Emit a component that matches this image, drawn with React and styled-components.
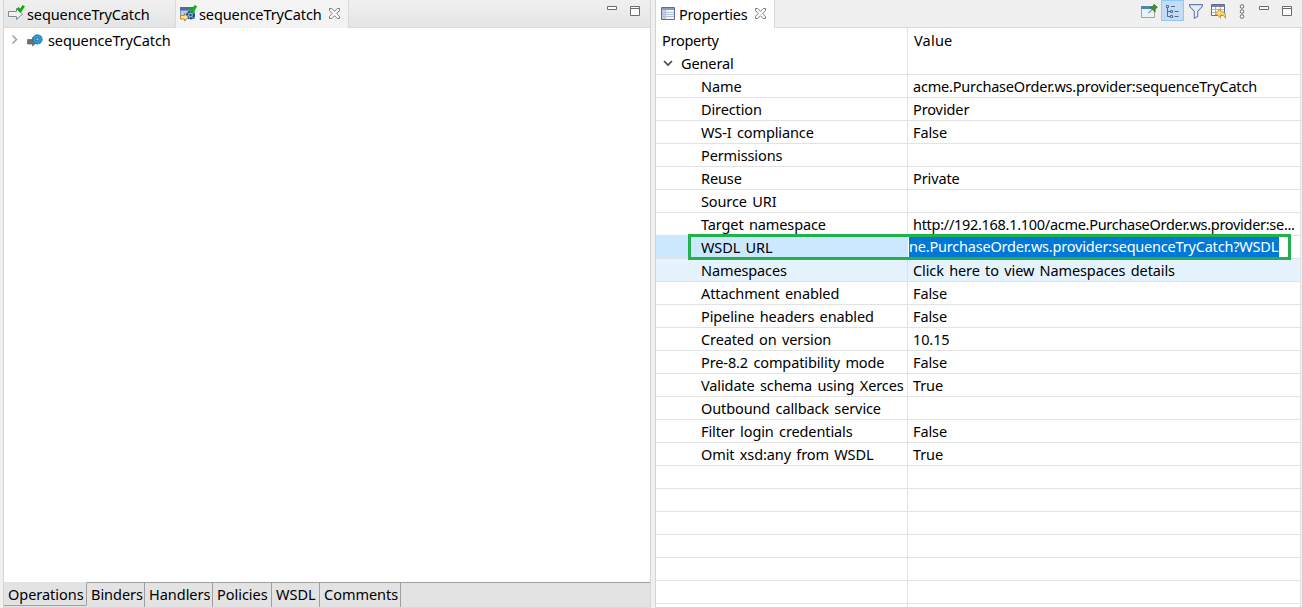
import React from "react";
import styled, { createGlobalStyle, css } from "styled-components";

const Global = createGlobalStyle`
  * { box-sizing: border-box; }
  body { margin: 0; background: #f0f0f0; overflow: hidden; }
`;

const Workbench = styled.div`
  display: flex;
  width: 1303px;
  height: 608px;
  background: #f0f0f0;
  color: #000;
  font-family: "Noto Sans", "Open Sans", sans-serif;
  font-size: 14.5px;
  line-height: 22px;
  white-space: nowrap;
`;

const Label = styled.span`
  letter-spacing: ${(p) => p.$ls ?? -0.11}px;
  word-spacing: 1.7px;
`;

const Panel = styled.section`
  display: flex;
  flex: none;
  flex-direction: column;
  border-left: 1px solid #d4d4d4;
  border-right: 1px solid #d4d4d4;
`;

const EditorPanel = styled(Panel)`
  width: 648px;
  margin: 0 4px 0 3px;
`;

const PropertiesPanel = styled(Panel)`
  width: 648px;
  border-bottom: 1px solid #d4d4d4;
`;

const TabBar = styled.header`
  display: flex;
  flex: none;
  height: 28px;
  background: linear-gradient(#f0f0f0, #e4e4e4);
  border-bottom: 1px solid #d9d9d9;
`;

const PlainTabBar = styled(TabBar)`
  background: #f0f0f0;
`;

const Tab = styled.div`
  display: flex;
  align-items: center;
  height: ${(p) => (p.$active ? 28 : 27)}px;
  width: ${(p) => p.$width}px;
  padding: 0 0 ${(p) => (p.$active ? 1 : 0)}px ${(p) => p.$pad}px;
  gap: ${(p) => p.$gap || 3}px;
  background: ${(p) => p.$bg || "transparent"};
  border-right: 1px solid #d9d9d9;
`;

const CloseSlot = styled.span`
  display: flex;
  margin-left: ${(p) => p.$left || 4}px;
`;

const Tools = styled.div`
  display: flex;
  margin-left: auto;
`;

const ToolButton = styled.span`
  display: flex;
  align-items: center;
  justify-content: center;
  width: 23px;
  height: 21px;
  padding-top: 2px;
  border: 1px solid transparent;
  border-top: 0;
  ${(p) =>
    p.$on &&
    css`
      background: #c2dcf3;
      border-color: #90c8f6;
      border-top: 1px solid #90c8f6;
    `}
`;

const WindowControls = styled.div`
  display: flex;
  gap: 13px;
  padding: 6px ${(p) => p.$right}px 0 ${(p) => p.$left || 0}px;
`;

const EditorBody = styled.div`
  flex: 1;
  background: #fff;
`;

const TreeRow = styled.div`
  display: flex;
  align-items: center;
  height: 23px;
  padding-left: 6px;
`;

const TreeIcon = styled.span`
  display: flex;
  margin: 0 5px 0 8px;
`;

const PageTabs = styled.footer`
  display: flex;
  height: 26px;
  background: #e3e3e3;
  border-bottom: 1px solid #d9d9d9;
`;

const PageTab = styled.div`
  width: ${(p) => p.$width}px;
  padding-left: 4px;
  height: ${(p) => (p.$active ? 24 : 25)}px;
  border-right: 1px solid #a0a0a0;
  border-top: 1px solid ${(p) => (p.$active ? "transparent" : "#a0a0a0")};
  ${(p) =>
    p.$active &&
    css`
      border-bottom: 1px solid #a0a0a0;
      border-bottom-right-radius: 2px;
    `}
`;

const PageTabsRest = styled.div`
  flex: 1;
  border-top: 1px solid #a0a0a0;
`;

const Table = styled.div`
  flex: 1;
  width: 645px;
  overflow: hidden;
  background: #fff;
  border-right: 1px solid #e2e2e2;
`;

const Row = styled.div`
  display: flex;
  height: ${(p) => (p.$header ? 24 : 23)}px;
  background: ${(p) => p.$bg || "#fff"};
`;

const Cell = styled.div`
  display: flex;
  align-items: center;
  height: 100%;
  border-bottom: 1px solid ${(p) => (p.$header ? "transparent" : "#e2e2e2")};
`;

const NameCell = styled(Cell)`
  flex: none;
  width: 252px;
  padding-left: ${(p) => p.$pad}px;
  border-right: 1px solid #e2e2e2;
`;

const ValueCell = styled(Cell)`
  flex: 1;
  min-width: 0;
  padding-left: ${(p) => (p.$header ? 6 : 5)}px;
`;

const Chevron = styled.span`
  display: flex;
  width: 18px;
`;

const EditField = styled.div`
  display: flex;
  width: 370px;
  height: 20px;
  margin: 0 0 1px -4px;
  line-height: 19px;
  background: #0078d7;
  color: #fff;
`;

const EditCell = styled(ValueCell)`
  background: #fff;
`;

const Highlight = styled.div`
  position: absolute;
  left: 688px;
  top: 234px;
  width: 603px;
  height: 26px;
  border: 3px solid #22b14c;
`;

const ArrowOutIcon = () => (
  <svg width="17" height="17" viewBox="0 0 17 17">
    <path d="M.5 6.500h8v-3l6 5.500-6 5.500v-3h-8z" fill="#eef1f4" stroke="#7b8c9b" />
    <path d="M9.500 3l2.800 2.900L15.800.800" fill="none" stroke="#12a812" strokeWidth="2.800" />
  </svg>
);

const ServiceIcon = () => (
  <svg width="17" height="17" viewBox="0 0 17 17">
    <path d="M.5 2.500h14v11H.5z" fill="#b9cbe4" stroke="#7f97bf" />
    <path d="M0 2h14v3.500H0z" fill="#4a6ba5" />
    <circle cx="10.500" cy="10" r="3.400" fill="#8fc0e4" stroke="#1f4f86" strokeWidth="2.200" strokeDasharray="2.600 .6" />
    <circle cx="10.500" cy="10" r="1.200" fill="#174477" />
    <path d="M.5 10.500h4v-2l4 3.700-4 3.800v-2h-4z" fill="#ffe39a" stroke="#b98a2c" />
    <path d="M9.800 3l2.700 2.900L15.800.800" fill="none" stroke="#12b012" strokeWidth="3" />
  </svg>
);

const OperationIcon = () => (
  <svg width="16" height="14" viewBox="0 0 16 14">
    <path d="M.5 6.500h5v-2l5 4.300-5 4.200v-2h-5z" fill="#6e6e6e" stroke="#555" strokeWidth=".6" />
    <circle cx="10.500" cy="6.300" r="4.300" fill="#3ba5dc" stroke="#1c7fbc" strokeWidth="1.600" strokeDasharray="2.400 .4" />
    <circle cx="10.500" cy="6.300" r="1.700" fill="#8dcdf0" stroke="#14629a" />
  </svg>
);

const CloseIcon = () => (
  <svg width="11" height="11" viewBox="0 0 11 11">
    <path
      d="M.5.500h2.200l2.800 2.800L8.300.500h2.200v2.200L7.700 5.500l2.800 2.800v2.200H8.300L5.500 7.700l-2.800 2.800H.5V8.300l2.800-2.800L.5 2.700z"
      fill="#fafafa"
      stroke="#6e6e6e"
      strokeWidth=".9"
    />
  </svg>
);

const PropertiesIcon = () => (
  <svg width="14" height="13" viewBox="0 0 14 13">
    <path d="M.5.500h13v12H.5z" fill="#f1f5fb" stroke="#5c6f92" />
    <path d="M1 1h12v2H1z" fill="#8a9cbf" />
    <path d="M1 3h3v9H1z" fill="#c3d0e6" />
    <path d="M4.500 3v9M1 5.500h12M1 7.500h12M1 9.500h12" stroke="#b5c1d6" fill="none" />
  </svg>
);

const PinIcon = () => (
  <svg width="17" height="16" viewBox="0 0 17 16">
    <path d="M.5 3.500h13v11H.5z" fill="#e6f3fa" stroke="#b3a473" />
    <path d="M0 3h10v3H0z" fill="#4d86ad" />
    <path d="M7.500 10l4-4" stroke="#555" />
    <path d="M9 4l2.500.3L13 1.500l3.300 2.700-2.300 2 .2 2.800z" fill="#3d9440" stroke="#22692a" strokeWidth=".8" />
  </svg>
);

const TreeModeIcon = () => (
  <svg width="13" height="13" viewBox="0 0 13 13" fill="none" stroke="#526a96">
    <path d="M1.500 3v8.500h3M1.500 6.500h3M5 1.500h4M8.500 6.500h4M8.500 11.500h4" />
    <path d="M.5.500h2v2h-2zM4.500 5.500h2v2h-2zM4.500 10.500h2v2h-2z" fill="#dbe8f7" />
  </svg>
);

const FilterIcon = () => (
  <svg width="14" height="15" viewBox="0 0 14 15">
    <path d="M.6.600h12.800v1.700L8.700 7.500v5L5.300 14.300V7.500L.6 2.300z" fill="#e3eefa" stroke="#6681b0" strokeWidth="1.100" />
  </svg>
);

const RestoreIcon = () => (
  <svg width="16" height="16" viewBox="0 0 16 16">
    <path d="M.5 1.500h13v11H.5z" fill="#fff" stroke="#5c6f92" />
    <path d="M1 2h12v2H1z" fill="#6e85ad" />
    <path d="M4.500 4v8M9.500 4v8M1 6.500h12M1 9.500h12" stroke="#a9b6cc" fill="none" />
    <path d="M9.500 5.500v2.800c3.500 0 5.500 2 5 7-.8-2.300-2.300-3.300-5-3.100V15L4.500 10.200z" fill="#fcd779" stroke="#c38a2a" strokeWidth=".9" />
  </svg>
);

const MenuDotsIcon = () => (
  <svg width="6" height="15" viewBox="0 0 6 15" fill="#fff" stroke="#6a6a6a">
    <circle cx="3" cy="2.500" r="1.800" />
    <circle cx="3" cy="7.500" r="1.800" />
    <circle cx="3" cy="12.500" r="1.800" />
  </svg>
);

const MinimizeIcon = () => (
  <svg width="10" height="4" viewBox="0 0 10 4">
    <path d="M.5.500h9v3h-9z" fill="#fff" stroke="#6b6b6b" />
  </svg>
);

const MaximizeIcon = () => (
  <svg width="10" height="10" viewBox="0 0 10 10">
    <path d="M.5.500h9v9h-9zM.5 2.500h9" fill="#fff" stroke="#6b6b6b" />
  </svg>
);

const ChevronRight = () => (
  <svg width="9" height="9" viewBox="0 0 9 9">
    <path d="M2.500.500l4 4-4 4" fill="none" stroke="#a0a0a0" strokeWidth="1.500" />
  </svg>
);

const ChevronDown = () => (
  <svg width="10" height="8" viewBox="0 0 10 8">
    <path d="M1 2l4 4 4-4" fill="none" stroke="#444" strokeWidth="1.600" />
  </svg>
);

const properties = [
  { name: "Name", value: "acme.PurchaseOrder.ws.provider:sequenceTryCatch", ls: -0.19 },
  { name: "Direction", value: "Provider" },
  { name: "WS-I compliance", value: "False" },
  { name: "Permissions", value: "" },
  { name: "Reuse", value: "Private" },
  { name: "Source URI", value: "" },
  { name: "Target namespace", value: "http://192.168.1.100/acme.PurchaseOrder.ws.provider:se...", ls: -0.29 },
  { name: "WSDL URL", value: "ne.PurchaseOrder.ws.provider:sequenceTryCatch?WSDL", ls: -0.2, state: "edit" },
  { name: "Namespaces", value: "Click here to view Namespaces details", state: "hover" },
  { name: "Attachment enabled", value: "False" },
  { name: "Pipeline headers enabled", value: "False" },
  { name: "Created on version", value: "10.15" },
  { name: "Pre-8.2 compatibility mode", value: "False" },
  { name: "Validate schema using Xerces", value: "True" },
  { name: "Outbound callback service", value: "" },
  { name: "Filter login credentials", value: "False" },
  { name: "Omit xsd:any from WSDL", value: "True" },
];

const rows = [...properties, ...Array(7).fill({ name: "", value: "" })];

const rowColors = { edit: "#cce8ff", hover: "#e5f3ff" };

const pages = [
  ["Operations", 83],
  ["Binders", 58],
  ["Handlers", 68],
  ["Policies", 59],
  ["WSDL", 48],
  ["Comments", 81],
];

export default function App() {
  return (
    <>
      <Global />
      <Workbench>
        <EditorPanel>
          <TabBar>
            <Tab $width={172} $pad={4} $gap={2}>
              <ArrowOutIcon />
              <Label>sequenceTryCatch</Label>
            </Tab>
            <Tab $width={173} $pad={4} $gap={2} $bg="#f3f3f3" $active>
              <ServiceIcon />
              <Label>sequenceTryCatch</Label>
              <CloseSlot $left={5}>
                <CloseIcon />
              </CloseSlot>
            </Tab>
            <Tools>
              <WindowControls $right={10}>
                <MinimizeIcon />
                <MaximizeIcon />
              </WindowControls>
            </Tools>
          </TabBar>
          <EditorBody>
            <TreeRow>
              <ChevronRight />
              <TreeIcon>
                <OperationIcon />
              </TreeIcon>
              <Label>sequenceTryCatch</Label>
            </TreeRow>
          </EditorBody>
          <PageTabs>
            {pages.map(([name, width], i) => (
              <PageTab key={name} $width={width} $active={i === 0}>
                <Label $ls={-0.03}>{name}</Label>
              </PageTab>
            ))}
            <PageTabsRest />
          </PageTabs>
        </EditorPanel>
        <PropertiesPanel>
          <PlainTabBar>
            <Tab $width={119} $pad={5} $gap={4} $bg="#fff" $active>
              <PropertiesIcon />
              <Label $ls={-0.18}>Properties</Label>
              <CloseSlot $left={3}>
                <CloseIcon />
              </CloseSlot>
            </Tab>
            <Tools>
              <ToolButton>
                <PinIcon />
              </ToolButton>
              <ToolButton $on>
                <TreeModeIcon />
              </ToolButton>
              <ToolButton>
                <FilterIcon />
              </ToolButton>
              <ToolButton>
                <RestoreIcon />
              </ToolButton>
              <ToolButton>
                <MenuDotsIcon />
              </ToolButton>
              <WindowControls $left={6} $right={10}>
                <MinimizeIcon />
                <MaximizeIcon />
              </WindowControls>
            </Tools>
          </PlainTabBar>
          <Table>
            <Row $header>
              <NameCell $pad={6} $header>
                <Label $ls={-0.28}>Property</Label>
              </NameCell>
              <ValueCell $header>
                <Label $ls={0.2}>Value</Label>
              </ValueCell>
            </Row>
            <Row>
              <NameCell $pad={7}>
                <Chevron>
                  <ChevronDown />
                </Chevron>
                <Label>General</Label>
              </NameCell>
              <ValueCell />
            </Row>
            {rows.map(({ name, value, ls, state }, i) => (
              <Row key={i} $bg={rowColors[state]}>
                <NameCell $pad={45}>
                  <Label>{name}</Label>
                </NameCell>
                {state === "edit" ? (
                  <EditCell>
                    <EditField>
                      <Label $ls={ls}>{value}</Label>
                    </EditField>
                  </EditCell>
                ) : (
                  <ValueCell>
                    <Label $ls={ls}>{value}</Label>
                  </ValueCell>
                )}
              </Row>
            ))}
          </Table>
        </PropertiesPanel>
      </Workbench>
      <Highlight />
    </>
  );
}
